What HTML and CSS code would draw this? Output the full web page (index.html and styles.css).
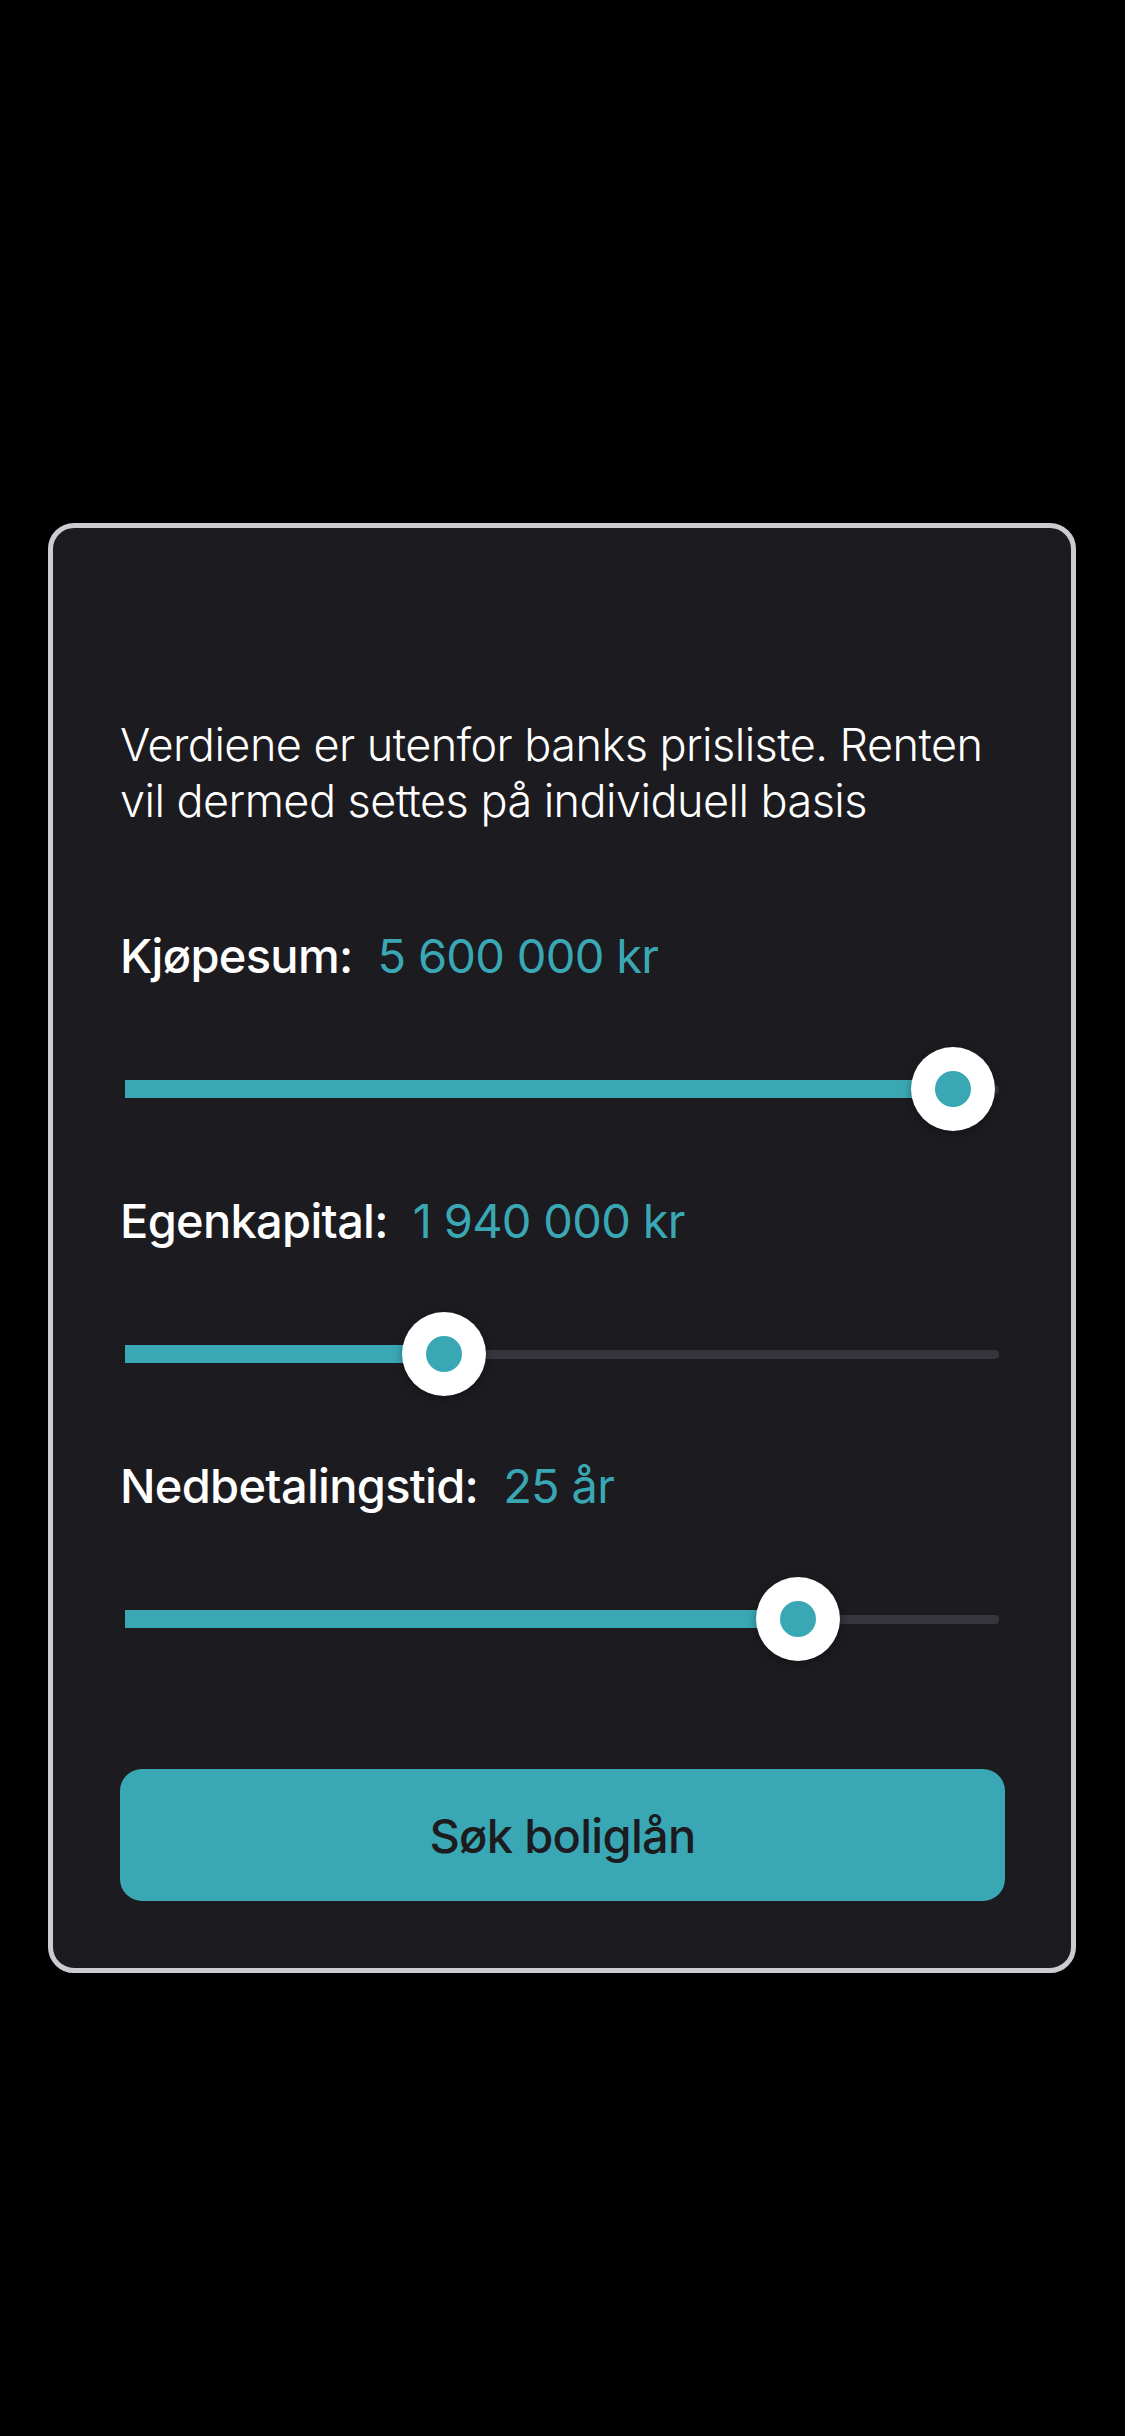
FILE: index.html
```html
<!DOCTYPE html>
<html lang="no">
<head>
<meta charset="utf-8">
<title>Boliglån</title>
<link rel="stylesheet" href="styles.css">
</head>
<body>
<main class="screen">
  <section class="card">
    <p class="notice">Verdiene er utenfor banks prisliste. Renten vil dermed settes på individuell basis</p>

    <div class="field">
      <div class="label"><span class="name">Kjøpesum:</span><span class="value">5 600 000 kr</span></div>
      <div class="slider">
        <div class="track"></div>
        <div class="fill" style="width: 828px"></div>
        <div class="thumb" style="left: 828px"></div>
      </div>
    </div>

    <div class="field">
      <div class="label"><span class="name">Egenkapital:</span><span class="value">1 940 000 kr</span></div>
      <div class="slider">
        <div class="track"></div>
        <div class="fill" style="width: 319px"></div>
        <div class="thumb" style="left: 319px"></div>
      </div>
    </div>

    <div class="field">
      <div class="label"><span class="name">Nedbetalingstid:</span><span class="value">25 år</span></div>
      <div class="slider">
        <div class="track"></div>
        <div class="fill" style="width: 673px"></div>
        <div class="thumb" style="left: 673px"></div>
      </div>
    </div>

    <button class="cta" type="button">Søk boliglån</button>
  </section>
</main>
</body>
</html>
```
FILE: styles.css
```css
html, body {
  margin: 0;
  padding: 0;
  background: #000;
}
body {
  font-family: Inter, "Open Sans", "Liberation Sans", sans-serif;
  color: #fff;
}
.screen {
  width: 1125px;
  height: 2436px;
  padding-top: 523px;
  box-sizing: border-box;
}
.card {
  margin-left: 48px;
  width: 1028px;
  height: 1450px;
  box-sizing: border-box;
  border: 5px solid #cbcbd0;
  border-radius: 26px;
  background: #1c1b20;
  padding: 189px 66px 66px 67px;
  display: flex;
  flex-direction: column;
}
.notice {
  margin: 0 0 99px;
  font-size: 45px;
  line-height: 56px;
  font-weight: 300;
  letter-spacing: -0.55px;
  color: #fff;
}
.field {
  display: flex;
  flex-direction: column;
  margin-bottom: 62px;
}
.label {
  display: flex;
  gap: 25px;
  font-size: 47px;
  line-height: 56px;
  font-weight: 500;
  letter-spacing: -0.7px;
  margin-bottom: 63px;
}
.name { color: #fff; }
.value { color: #3aa7b4; font-weight: 400; }
.slider {
  position: relative;
  height: 84px;
  margin: 0 6px 0 5px;
}
.track {
  position: absolute;
  left: 0;
  right: 0;
  top: 38px;
  height: 9px;
  border-radius: 4px;
  background: #36353b;
}
.fill {
  position: absolute;
  left: 0;
  top: 33px;
  height: 18px;
  background: #3aa7b4;
}
.thumb {
  position: absolute;
  top: 0;
  width: 84px;
  height: 84px;
  margin-left: -42px;
  box-sizing: border-box;
  border-radius: 50%;
  background: #fff;
  box-shadow: 0 2px 8px rgba(0, 0, 0, 0.35);
  display: flex;
  align-items: center;
  justify-content: center;
}
.thumb::after {
  content: "";
  width: 36px;
  height: 36px;
  border-radius: 50%;
  background: #3aa7b4;
}
.cta {
  margin-top: 46px;
  height: 132px;
  border: 0;
  border-radius: 22px;
  background: #3aa7b4;
  color: #1c1b20;
  font-family: Inter, "Open Sans", "Liberation Sans", sans-serif;
  font-size: 47px;
  font-weight: 500;
  letter-spacing: -0.7px;
  cursor: pointer;
}
```
